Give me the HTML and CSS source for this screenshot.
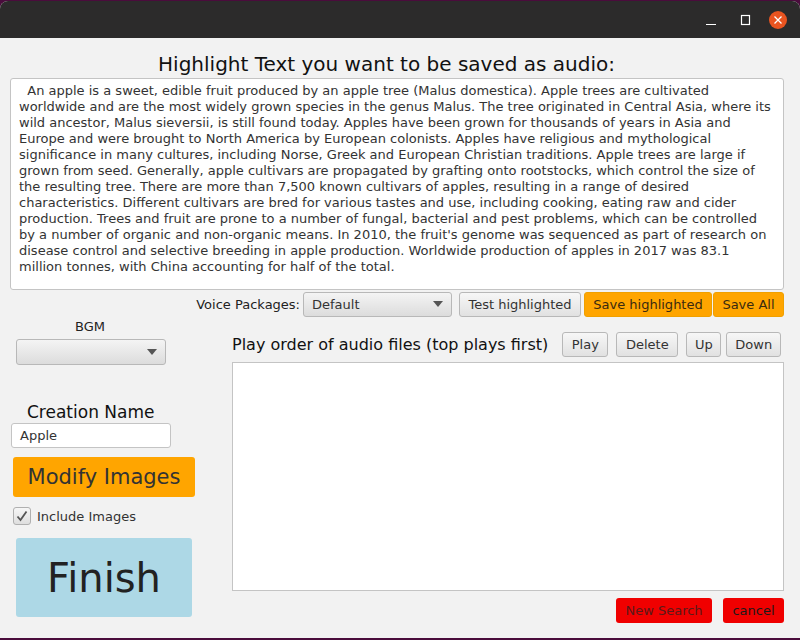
FILE: index.html
```html
<!DOCTYPE html>
<html>
<head>
<meta charset="utf-8">
<link rel="stylesheet" href="styles.css">
</head>
<body>
<div class="window">
  <div class="titlebar">
    <div class="wm-btn wm-min"><svg width="12" height="12" viewBox="0 0 12 12"><path d="M1 10.5H11" stroke="#fff" stroke-width="1.2"/></svg></div>
    <div class="wm-btn wm-max"><svg width="12" height="12" viewBox="0 0 12 12"><rect x="2.5" y="1.5" width="8" height="9" fill="none" stroke="#fff" stroke-width="1.2"/></svg></div>
    <div class="wm-btn wm-close"><svg width="18" height="18" viewBox="0 0 18 18"><circle cx="9" cy="9" r="9" fill="#e95420"/><path d="M5.5 5.5L12.5 12.5M12.5 5.5L5.5 12.5" stroke="#fff" stroke-width="1.3"/></svg></div>
  </div>
  <div class="content">
    <h1 class="heading">Highlight Text you want to be saved as audio:</h1>
    <div class="textarea">
      <div class="ln">  An apple is a sweet, edible fruit produced by an apple tree (Malus domestica). Apple trees are cultivated</div>
      <div class="ln">worldwide and are the most widely grown species in the genus Malus. The tree originated in Central Asia, where its</div>
      <div class="ln">wild ancestor, Malus sieversii, is still found today. Apples have been grown for thousands of years in Asia and</div>
      <div class="ln">Europe and were brought to North America by European colonists. Apples have religious and mythological</div>
      <div class="ln">significance in many cultures, including Norse, Greek and European Christian traditions. Apple trees are large if</div>
      <div class="ln">grown from seed. Generally, apple cultivars are propagated by grafting onto rootstocks, which control the size of</div>
      <div class="ln">the resulting tree. There are more than 7,500 known cultivars of apples, resulting in a range of desired</div>
      <div class="ln">characteristics. Different cultivars are bred for various tastes and use, including cooking, eating raw and cider</div>
      <div class="ln">production. Trees and fruit are prone to a number of fungal, bacterial and pest problems, which can be controlled</div>
      <div class="ln">by a number of organic and non-organic means. In 2010, the fruit's genome was sequenced as part of research on</div>
      <div class="ln">disease control and selective breeding in apple production. Worldwide production of apples in 2017 was 83.1</div>
      <div class="ln">million tonnes, with China accounting for half of the total.</div>
    </div>
    <div class="voice-row">
      <span class="label">Voice Packages:</span>
      <div class="combo combo-voice"><span>Default</span><span class="arrow"></span></div>
      <button class="btn btn-test">Test highlighted</button>
      <button class="btn btn-orange btn-save">Save highlighted</button>
      <button class="btn btn-orange btn-saveall">Save All</button>
    </div>
    <div class="lower">
      <div class="left">
        <div class="bgm-label">BGM</div>
        <div class="combo combo-bgm"><span></span><span class="arrow"></span></div>
        <div class="cn-label">Creation Name</div>
        <div class="textfield">Apple</div>
        <button class="btn-modify">Modify Images</button>
        <div class="check-row">
          <span class="checkbox"><svg width="14" height="14" viewBox="0 0 14 14"><path d="M2.5 7.5L5.5 11L11.5 2.5" fill="none" stroke="#555" stroke-width="1.8"/></svg></span>
          <span class="check-label">Include Images</span>
        </div>
        <button class="btn-finish">Finish</button>
      </div>
      <div class="right">
        <div class="play-head">
          <span class="play-label">Play order of audio files (top plays first)</span>
          <button class="btn btn-play">Play</button>
          <button class="btn btn-delete">Delete</button>
          <button class="btn btn-up">Up</button>
          <button class="btn btn-down">Down</button>
        </div>
        <div class="listbox"></div>
        <div class="bottom-row">
          <button class="btn-red btn-new">New Search</button>
          <button class="btn-red btn-cancel">cancel</button>
        </div>
      </div>
    </div>
  </div>
</div>
</body>
</html>
```

FILE: styles.css
```css
* { box-sizing: border-box; }
html, body { margin: 0; padding: 0; }
body {
  width: 800px;
  height: 640px;
  background: #4a0c3c;
  font-family: "DejaVu Sans", sans-serif;
  overflow: hidden;
  padding-top: 1px;
}
.window {
  width: 800px;
  height: 637px;
  background: #f2f2f2;
  border-radius: 8px 8px 0 0;
  overflow: hidden;
  display: flex;
  flex-direction: column;
}
.titlebar {
  height: 37px;
  background: #2c2b2b;
  display: flex;
  align-items: center;
  justify-content: flex-end;
  padding-right: 13px;
  flex-shrink: 0;
}
.wm-btn { display: flex; align-items: center; justify-content: center; }
.wm-min { width: 12px; height: 12px; margin-right: 22px; }
.wm-max { width: 12px; height: 12px; margin-right: 18px; }
.wm-close { width: 18px; height: 18px; }
.content {
  flex: 1;
  padding: 0 16px 0 10px;
  display: flex;
  flex-direction: column;
}
.heading {
  margin: 0;
  height: 40px;
  padding-top: 14px;
  font-weight: normal;
  font-size: 20px;
  line-height: 24px;
  text-align: center;
  color: #111;
  padding-right: 21px;
  white-space: nowrap;
}
.textarea {
  height: 212px;
  background: #fff;
  border: 1px solid #c4c4c4;
  border-radius: 3px;
  padding: 4px 8px;
  color: #333;
  font-size: 13px;
  line-height: 16px;
  width: 774px;
}
.ln { white-space: pre; }
.voice-row {
  display: flex;
  align-items: center;
  justify-content: flex-end;
  height: 26px;
  margin-top: 1px;
  width: 774px;
}
.label { font-size: 13px; color: #222; margin-right: 3px; }
.btn {
  font-family: "DejaVu Sans", sans-serif;
  font-size: 13px;
  color: #333;
  background: linear-gradient(#f7f7f7, #e1e1e1);
  border: 1px solid #b8b8b8;
  border-radius: 3px;
  padding: 0;
  height: 25px;
}
.combo {
  display: flex;
  align-items: center;
  justify-content: space-between;
  background: linear-gradient(#f4f4f4, #dcdcdc);
  border: 1px solid #b8b8b8;
  border-radius: 3px;
  font-size: 13px;
  color: #333;
  padding: 0 8px 0 8px;
}
.arrow {
  width: 0; height: 0;
  border-left: 5px solid transparent;
  border-right: 5px solid transparent;
  border-top: 6px solid #555;
}
.combo-voice { width: 149px; height: 25px; margin-right: 7px; }
.btn-test { width: 122px; margin-right: 3px; }
.btn-orange { background: #ffa500; border-color: #f0a000; color: #3a2a10; }
.btn-save { width: 128px; margin-right: 1px; }
.btn-saveall { width: 71px; }
.lower {
  flex: 1;
  display: grid;
  grid-template-columns: 222px 551px;
}
.left { display: flex; flex-direction: column; }
.bgm-label { font-size: 13px; color: #222; text-align: center; width: 160px; margin-top: 2px; margin-left: 0; }
.combo-bgm { width: 150px; height: 26px; margin-left: 6px; margin-top: 5px; }
.cn-label { font-size: 17px; color: #111; margin-top: 37px; margin-left: 17px; line-height: 20px; }
.textfield {
  width: 160px; height: 25px; margin-left: 1px; margin-top: 1px;
  background: #fff; border: 1px solid #c4c4c4; border-radius: 3px;
  font-size: 13px; color: #333; padding: 4px 8px; line-height: 15px;
}
.btn-modify {
  width: 182px; height: 40px; margin-left: 3px; margin-top: 9px;
  background: #ffa500; border: none; border-radius: 3px;
  font-family: "DejaVu Sans", sans-serif; font-size: 21px; color: #333; padding: 0;
}
.check-row { display: flex; align-items: center; margin-top: 10px; margin-left: 3px; height: 18px; }
.checkbox {
  width: 18px; height: 18px; border: 1px solid #b0b0b0; border-radius: 3px;
  background: linear-gradient(#f6f6f6, #dedede);
  display: flex; align-items: center; justify-content: center;
}
.check-label { font-size: 13px; color: #333; margin-left: 6px; }
.btn-finish {
  width: 176px; height: 79px; margin-left: 6px; margin-top: 13px;
  background: #add8e6; border: none; border-radius: 3px;
  font-family: "DejaVu Sans", sans-serif; font-size: 40px; color: #222; padding: 0;
}
.right { display: flex; flex-direction: column; }
.play-head { display: flex; align-items: center; height: 26px; margin-top: 14px; }
.play-label { font-size: 16px; color: #111; margin-right: 14px; }
.btn-play { width: 46px; margin-right: 8px; }
.btn-delete { width: 62px; margin-right: 8px; }
.btn-up { width: 35px; margin-right: 5px; }
.btn-down { width: 55px; }
.listbox {
  height: 229px; width: 552px; margin-top: 5px;
  background: #fff; border: 1px solid #c4c4c4;
}
.bottom-row { display: flex; justify-content: flex-end; margin-top: 7px; width: 552px; }
.btn-red {
  height: 25px; background: #f00000; border: none; border-radius: 3px;
  font-family: "DejaVu Sans", sans-serif; font-size: 13px; padding: 0;
}
.btn-new { width: 96px; color: #5a1a1a; margin-right: 11px; }
.btn-cancel { width: 61px; color: #1a1a1a; }
```
